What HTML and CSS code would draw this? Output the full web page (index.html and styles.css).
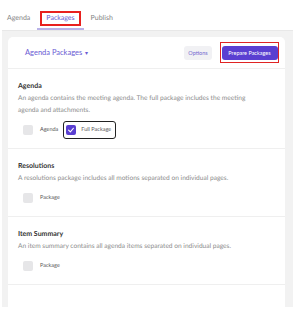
FILE: index.html
```html
<!DOCTYPE html>
<html lang="en">
<head>
  <meta charset="UTF-8" />
  <title>Packages</title>
  <link rel="stylesheet" href="styles.css">
</head>
<body>
  <nav class="tabs">
    <a class="tab"><span class="tab-label">Agenda</span></a>
    <a class="tab active"><span class="tab-label">Packages</span></a>
    <a class="tab"><span class="tab-label">Publish</span></a>
  </nav>

  <main class="panel">
    <div class="card">
      <header class="card-header">
        <button class="dropdown">Agenda Packages <span class="caret">&#9662;</span></button>
        <div class="actions">
          <button class="btn btn-light">Options</button>
          <span class="highlight-btn"><button class="btn btn-primary">Prepare Packages</button></span>
        </div>
      </header>

      <section class="section">
        <h2>Agenda</h2>
        <p>An agenda contains the meeting agenda. The full package includes the meeting agenda and attachments.</p>
        <div class="options">
          <label class="check"><span class="box"></span>Agenda</label>
          <label class="check outlined"><span class="box checked">
            <svg viewBox="0 0 10 10" width="8" height="8"><path d="M2 5.2 L4.2 7.3 L8 2.8" fill="none" stroke="#fff" stroke-width="1.4" stroke-linecap="round" stroke-linejoin="round"/></svg>
          </span>Full Package</label>
        </div>
      </section>

      <section class="section">
        <h2>Resolutions</h2>
        <p>A resolutions package includes all motions separated on individual pages.</p>
        <div class="options">
          <label class="check"><span class="box"></span>Package</label>
        </div>
      </section>

      <section class="section">
        <h2>Item Summary</h2>
        <p>An item summary contains all agenda items separated on individual pages.</p>
        <div class="options">
          <label class="check"><span class="box"></span>Package</label>
        </div>
      </section>
    </div>
  </main>
</body>
</html>
```

FILE: styles.css
```css
* {
  box-sizing: border-box;
  margin: 0;
  padding: 0;
}

body {
  font-family: 'Lato', 'Liberation Sans', sans-serif;
  text-rendering: geometricPrecision;
  background: #fff;
  color: #333;
  width: 293px;
  height: 320px;
  overflow: hidden;
}

/* tabs */
.tabs {
  display: flex;
  align-items: flex-end;
  gap: 4px;
  padding-left: 4px;
  height: 30px;
}

.tab {
  padding: 0 3px 2px;
  border-bottom: 2px solid transparent;
}

.tab-label {
  display: inline-block;
  font-size: 7px;
  line-height: 9px;
  color: #858585;
  padding: 3px 0;
}

.tab.active {
  border-bottom-color: #b9b2e8;
}

.tab.active .tab-label {
  color: #6a5bd3;
  padding: 1px 4px;
  border: 2px solid #e8201e;
}

/* panel + card */
.panel {
  background: #f2f2f2;
  border-top: 1px solid #e8e8e8;
  margin-left: 2px;
  padding: 6px 8px 0 6px;
  height: 277px;
  overflow: hidden;
}

.card {
  background: #fff;
  border-radius: 5px 5px 0 0;
  height: 300px;
}

.card-header {
  display: flex;
  justify-content: space-between;
  align-items: center;
  height: 32px;
  padding: 0 6px 0 17px;
  border-bottom: 1px solid #efefef;
}

.dropdown {
  font-family: inherit;
  font-size: 7.5px;
  color: #6a5bd3;
  background: none;
  border: none;
}

.caret {
  font-size: 6px;
  margin-left: 1px;
}

.actions {
  display: flex;
  align-items: center;
  gap: 8px;
}

.btn {
  font-family: inherit;
  font-size: 5.5px;
  border: none;
  border-radius: 3px;
  height: 14px;
  display: block;
}

.btn-light {
  background: #f1f1f4;
  color: #7468cf;
  width: 28px;
}

.btn-primary {
  background: #5a3fd1;
  color: #fff;
  width: 56px;
}

.highlight-btn {
  display: block;
  padding: 2.5px 0.5px;
  border: 1.5px solid #e02424;
}

/* sections */
.section {
  padding: 11px 22px 9px 10px;
  border-bottom: 1px solid #efefef;
}

.section h2 {
  font-size: 7px;
  line-height: 12px;
  font-weight: 700;
  color: #333;
}

.section p {
  font-size: 6.6px;
  line-height: 12px;
  color: #8c8c8c;
}

.options {
  display: flex;
  align-items: center;
  gap: 5px;
  margin-top: 5px;
  height: 18px;
}

.check {
  display: flex;
  align-items: center;
  gap: 7px;
  font-size: 5.5px;
  color: #555;
  padding: 0 0 0 5px;
}

.check.outlined {
  border: 1px solid #222;
  border-radius: 3px;
  height: 18px;
  padding: 0 4px 0 2px;
  gap: 5px;
}

.box {
  width: 10px;
  height: 10px;
  border-radius: 2px;
  background: #e6e6e8;
  display: flex;
  align-items: center;
  justify-content: center;
}

.box.checked {
  background: #5a3fd1;
}
```
